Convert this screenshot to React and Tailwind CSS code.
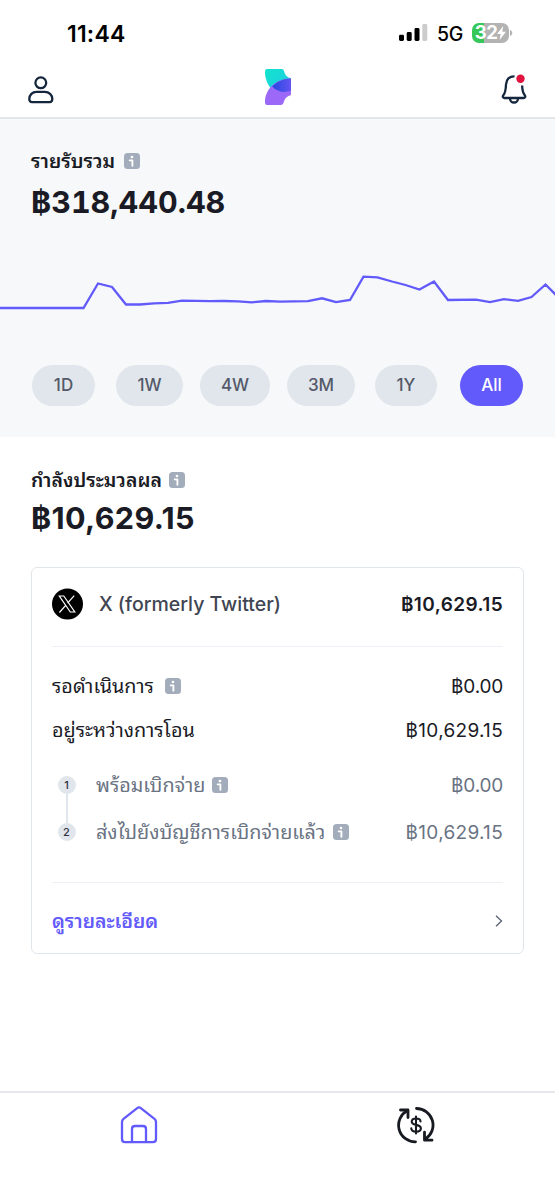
import clsx from "clsx";

const ranges = [
  { label: "1D", width: "w-[63px]", gap: "mr-[21px]" },
  { label: "1W", width: "w-[67px]", gap: "mr-[17px]" },
  { label: "4W", width: "w-[70px]", gap: "mr-[17px]" },
  { label: "3M", width: "w-[68px]", gap: "mr-[20px]" },
  { label: "1Y", width: "w-[62px]", gap: "mr-[23px]" },
  { label: "All", width: "w-[63px]", gap: "" },
];

const points =
  "0,308 83.5,308 98,283.5 112,287 126,304.5 140,304.5 154,303.3 168,302.8 182,300.7 210,301.2 224,301 238,301.3 252,302.3 266,301 280,301.6 308,301.2 322,298.3 336,302.2 350,300 363.5,276.7 377.5,277.3 392,281.5 405.5,285 419.5,289.5 434,281.5 448,300 476,299.7 490,302.2 504,299.2 518,300.8 531.5,297 545.5,284.5 556,295";

export default function App() {
  return (
    <div className="flex h-[1200px] w-[555px] flex-col overflow-hidden bg-white font-[Inter,'Noto_Sans',sans-serif] text-[#1a1b25]">
      <StatusBar />
      <TopBar />
      <Earnings />
      <Processing />
      <BottomNav />
    </div>
  );
}

function StatusBar() {
  return (
    <div className="flex h-[61px] shrink-0 justify-between pt-[19px] pr-[42px] pl-[67px] text-black">
      <span className="pt-px text-[23px] leading-7 font-semibold tracking-[0.2px]">11:44</span>
      <div className="flex h-7 items-center">
        <svg width="30" height="18" viewBox="0 0 30 18" className="mr-[9px]">
          <rect x="1" y="10.7" width="5" height="6.3" rx="1.4" />
          <rect x="8.7" y="8" width="5" height="9" rx="1.4" />
          <rect x="16.5" y="4" width="5" height="13" rx="1.4" />
          <rect x="24.3" y="0" width="5" height="17" rx="1.4" fill="#ccc" />
        </svg>
        <span className="mr-[9px] pt-px text-[19.5px] leading-7 font-[450] tracking-[-0.3px]">5G</span>
        <div className="flex h-5 w-[37px] items-center justify-center rounded-[7px] bg-linear-to-r from-[#35c75a] from-33% to-[#b3b3b3] to-33% text-[18.5px] font-bold text-white">
          <span className="tracking-[-0.6px]">32</span>
          <svg width="9" height="14" viewBox="0 0 9 14" fill="currentColor">
            <path d="M6.2 0 0 8h3.6L2.6 14 9 5.8H5.3z" />
          </svg>
        </div>
        <svg width="3" height="6" viewBox="0 0 3 6" className="ml-px">
          <path d="M0 0c3 1 3 5 0 6z" fill="#b3b3b3" />
        </svg>
      </div>
    </div>
  );
}

function TopBar() {
  return (
    <header className="flex h-[58px] shrink-0 items-start justify-between border-b-2 border-[#e3e5e9] pr-[27px] pl-7">
      <svg width="26" height="28" viewBox="0 0 26 28" fill="none" stroke="#14273d" strokeWidth="2.3" className="mt-[15px]">
        <circle cx="12.8" cy="6.8" r="5.4" />
        <path d="M8.5 15.9h8.3c4.2 0 7.5 3 7.5 7.2 0 1.9-.8 3-2.6 3H4c-1.8 0-2.7-1.1-2.7-3 0-4.2 3.1-7.2 7.2-7.2z" />
      </svg>
      <svg width="28" height="38" viewBox="0 0 28 38" className="mt-[7px] ml-px">
        <defs>
          <linearGradient id="teal" x1="0" x2="1" y1="0" y2="1">
            <stop offset="0" stopColor="#10e5cc" />
            <stop offset="1" stopColor="#25c5e8" />
          </linearGradient>
          <linearGradient id="overlap">
            <stop offset="0" stopColor="#2447df" />
            <stop offset="1" stopColor="#6554f2" />
          </linearGradient>
        </defs>
        <path d="M3 1h14.5c2 0 2.3 1 3 3.5.8 3 3 5 6.5 5.8v4L13 27C6 21 1 13 1 4.5 1 2 1.5 1 3 1z" fill="url(#teal)" />
        <path d="M27 10.5V27c-3.5 1-6 3-6.9 6-.7 2.5-1.3 4-3.6 4H3c-1.5 0-2-1-2-3C1 22 11 10.5 27 10.5z" fill="#9b68f7" />
        <path d="M27 10.5c-7.5 0-14 3-18.7 8C12.5 23 18.5 25.7 27 22.5z" fill="url(#overlap)" />
      </svg>
      <svg width="27" height="32" viewBox="0 0 27 32" fill="none" stroke="#14273d" strokeWidth="2.3" strokeLinejoin="round" className="mt-[12px]">
        <path d="M13.5 3.4C8.5 3.2 5.2 6 5 11.5c-.2 5-.4 8-2.5 10.5-1.2 1.5-.8 3 .8 3h19.5c1.6 0 2-1.5.8-3-2-2.5-2.3-5-2.5-9.5" />
        <path d="M9 25.5a4 4 0 0 0 8 0" />
        <circle cx="19.5" cy="5.7" r="4.2" fill="#e0143f" stroke="none" />
      </svg>
    </header>
  );
}

function Earnings() {
  return (
    <section className="flex h-[318px] shrink-0 flex-col bg-[#f6f8fa]">
      <div className="px-[31px] pt-7">
        <Label width="w-[85px]">รายรับรวม</Label>
        <Total className="mt-[7px] tabular-nums">318,440.48</Total>
      </div>
      <svg width="555" height="60" viewBox="0 262 555 60" className="mt-10 shrink-0">
        <polyline points={points} fill="none" stroke="#625afa" strokeWidth="2.3" />
      </svg>
      <div className="mt-[43px] flex px-8">
        {ranges.map(({ label, width, gap }) => (
          <button
            key={label}
            className={clsx(
              "h-[41px] shrink-0 rounded-full text-[17px] font-medium",
              width,
              gap,
              label === "All" ? "bg-[#625afa] text-white" : "bg-[#e0e6eb] text-[#545969]"
            )}
          >
            {label}
          </button>
        ))}
      </div>
    </section>
  );
}

function Processing() {
  return (
    <section className="px-[31px] pt-[29px]">
      <Label width="w-[130px]">กำลังประมวลผล</Label>
      <Total className="mt-1 tracking-[0.35px]">10,629.15</Total>
      <div className="mt-[29px] h-[387px] w-[493px] rounded-md border-[1.5px] border-[#e1e6eb] px-5 text-[19px]">
        <div className="flex h-[79px] items-center border-b border-[#edf0f4] pb-[5px]">
          <XLogo />
          <span className="ml-4 text-[19.5px] font-medium text-[#414552]">X (formerly Twitter)</span>
          <span className="ml-auto pt-px font-semibold tracking-[0.4px]">฿10,629.15</span>
        </div>
        <Row className="mt-[18px]" label="รอดำเนินการ" width="w-[105px]" info amount="0.00" />
        <Row label="อยู่ระหว่างการโอน" width="w-[146px]" amount="10,629.15" />
        <div className="mt-[11px] flex text-[#6a7383]">
          <div className="mr-[20px] ml-[5px] flex w-[19px] flex-col items-center pt-[12px]">
            <Step>1</Step>
            <span className="h-[29px] w-[2px] bg-[#e0e6eb]" />
            <Step>2</Step>
          </div>
          <div className="grow">
            <Row label="พร้อมเบิกจ่าย" width="w-[108px]" info amount="0.00" />
            <Row className="mt-[3px]" label="ส่งไปยังบัญชีการเบิกจ่ายแล้ว" width="w-[229px]" info amount="10,629.15" />
          </div>
        </div>
        <div className="mt-[27px] flex h-[69px] items-center justify-between border-t border-[#edf0f4] pt-[8px]">
          <ThaiText width="w-[105px]" className="pb-[3px] text-[19.4px] font-semibold text-[#625afa]">ดูรายละเอียด</ThaiText>
          <svg width="8" height="12" viewBox="0 0 8 12" fill="none" stroke="#596171" strokeWidth="1.3">
            <path d="m1 .8 5.5 5.2L1 11.2" />
          </svg>
        </div>
      </div>
    </section>
  );
}

function Total({ children, className }) {
  return <p className={clsx("text-[30.5px] leading-10 font-bold", className)}>฿{children}</p>;
}

function Row({ label, width, info, amount, className }) {
  return (
    <div className={clsx("flex h-11 items-center", className)}>
      <ThaiText width={width} className="pb-[6px] text-[19.8px]">{label}</ThaiText>
      {info && <InfoIcon className="mb-[3px]" />}
      <span className={clsx("ml-auto", amount === "0.00" ? "tracking-[-0.2px]" : "tracking-[0.3px]")}>฿{amount}</span>
    </div>
  );
}

function Label({ children, width }) {
  return (
    <div className="flex h-7 items-center">
      <ThaiText width={width} className="pb-[3px] text-[19.4px] font-semibold">{children}</ThaiText>
      <InfoIcon className="mb-px" />
    </div>
  );
}

function ThaiText({ children, width, className }) {
  return (
    <span
      className={clsx(
        "shrink-0 font-['Noto_Sans_Thai_Looped',Thonburi,Loma,Waree,Inter,sans-serif] leading-7 whitespace-nowrap",
        width,
        className
      )}
    >
      {children}
    </span>
  );
}

function InfoIcon({ className }) {
  return (
    <svg width="16" height="16" viewBox="0 0 16 16" className={clsx("ml-2 shrink-0", className)}>
      <rect width="16" height="16" rx="3.5" fill="#a3acba" />
      <circle cx="8" cy="4" r="1.35" fill="#fff" />
      <path d="M5.7 7.4h2.7v5.3" fill="none" stroke="#fff" strokeWidth="1.9" strokeLinecap="round" strokeLinejoin="round" />
    </svg>
  );
}

function Step({ children }) {
  return (
    <span className="flex size-[18px] shrink-0 items-center justify-center rounded-full bg-[#e0e6eb] text-[11px] font-medium text-[#30313d]">
      {children}
    </span>
  );
}

function XLogo() {
  return (
    <svg width="32" height="32" viewBox="0 0 32 32" fill="none" className="-mt-px -ml-px">
      <circle cx="16.5" cy="16" r="15.5" fill="#000" />
      <path d="M8.3 8h4.5l11 16h-4.5zM23.2 7.6l-6.6 7.5M14.9 17.2l-6.5 7.3" stroke="#fff" strokeWidth="1.2" />
    </svg>
  );
}

function BottomNav() {
  return (
    <nav className="mt-auto flex h-[109px] shrink-0 border-t-2 border-[#e6e8eb] pt-[13px]">
      <a href="#home" className="flex w-1/2 justify-center">
        <svg width="38" height="38" viewBox="0 0 38 38" fill="none" stroke="#625afa" strokeWidth="2.3" strokeLinejoin="round">
          <path d="M17.2 2.1 3.5 12.8C2.3 13.7 2 14.5 2 16v17c0 2 1 3.2 3 3.2h28c2 0 3-1.2 3-3.2V16c0-1.5-.3-2.3-1.5-3.2L20.8 2.1a3 3 0 0 0-3.6 0z" />
          <path d="M12 36V23c0-2 1-3 3-3h8c2 0 3 1 3 3v13" />
        </svg>
      </a>
      <a href="#payouts" className="flex w-1/2 justify-center">
        <svg width="38" height="38" viewBox="0 0 38 38" fill="none" stroke="#171a20" strokeWidth="2.8" strokeLinecap="round" strokeLinejoin="round">
          <path d="M19.5 2.5A16.6 16.6 0 0 1 28.5 33M18.5 35.8A16.6 16.6 0 0 1 10.5 4.5" />
          <path d="M3.5 4H11v7.5M35 34.2h-7.5v-8" />
          <path d="M23.5 15.5c0-1.9-1.7-3-4.4-3-2.8 0-4.4 1.2-4.4 3.2 0 4.3 9.2 2 9.2 6.6 0 2.1-1.9 3.4-4.8 3.4s-4.8-1.3-4.8-3.3M19 10.5v17" strokeWidth="2.1" />
        </svg>
      </a>
    </nav>
  );
}
